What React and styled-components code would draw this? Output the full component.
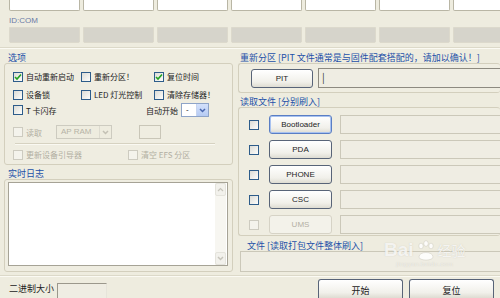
import React from 'react'
import styled, {createGlobalStyle} from 'styled-components'

const GlobalStyle = createGlobalStyle`
  html, body {
    margin: 0;
    padding: 0;
    background: #eeecdf;
  }
  body {
    font-family: "Noto Sans CJK SC", "Liberation Sans", sans-serif;
  }
`

const Window = styled.div`
  position: relative;
  width: 500px;
  height: 298px;
  overflow: hidden;
  background: #eeecdf;
  font-size: 8px;
  color: #222;
`

const SlotRow = styled.div`
  display: flex;
  gap: 3px;
  padding-left: 9px;
  height: ${p => p.h}px;
  margin-top: ${p => p.mt || 0}px;
`

const Slot = styled.div`
  flex: 0 0 71px;
  box-sizing: border-box;
  background: ${p => p.grey ? '#d6d4cb' : '#fff'};
  border: 1px solid ${p => p.grey ? '#dcd9cc' : '#b9b6a5'};
  border-top: ${p => p.grey ? '1px solid #dcd9cc' : 'none'};
  border-radius: 0 0 2px 2px;
`

const IdLabel = styled.div`
  height: 10px;
  margin-top: 5px;
  padding-left: 9px;
  font-family: "Liberation Sans", sans-serif;
  font-size: 8px;
  line-height: 10px;
  color: #6b7aa6;
`

const Divider = styled.div`
  height: 1px;
  margin-top: ${p => p.mt || 0}px;
  background: #dcd9c9;
  border-bottom: 1px solid #fbfaf3;
`

const Main = styled.div`
  display: flex;
  gap: 5px;
  padding-left: 4px;
  height: 226px;
`

const Column = styled.div`
  display: flex;
  flex-direction: column;
  width: ${p => p.w}px;
`

const GroupTitle = styled.div`
  height: 10px;
  line-height: 10px;
  padding-left: ${p => p.indent || 4}px;
  margin-top: ${p => p.mt || 0}px;
  font-size: 9px;
  color: #2350a8;
  white-space: nowrap;
`

const Group = styled.div`
  box-sizing: border-box;
  height: ${p => p.h}px;
  border: 1px solid #d3cfbd;
  border-right: ${p => p.open ? 'none' : '1px solid #d3cfbd'};
  border-radius: 3px;
  background: #efede1;
`

const OptionsBody = styled.div`
  display: flex;
  flex-direction: column;
  padding: 6px 0 0 8px;
`

const CheckGrid = styled.div`
  display: grid;
  grid-template-columns: 68px 73px auto;
  row-gap: 5px;
`

const CheckItem = styled.label`
  display: flex;
  align-items: center;
  gap: 3px;
  height: 13px;
  white-space: nowrap;
  color: ${p => p.disabled ? '#b2afa2' : '#222'};
`

const Box = styled.span`
  display: block;
  position: relative;
  flex: 0 0 auto;
  box-sizing: border-box;
  width: 10px;
  height: 10px;
  border: 1px solid ${p => p.disabled ? '#cdcbc0' : '#2d5c8a'};
  background: ${p => p.disabled ? '#f4f3ec' : 'linear-gradient(135deg, #dcdcd6, #fdfdfb)'};
`

const CheckMark = () => (
  <svg width="8" height="8" viewBox="0 0 8 8" style={{position: 'absolute', left: 0, top: 0}}>
    <path d="M1 4 L3 6 L7 1.5" fill="none" stroke="#21a121" strokeWidth="1.6"/>
  </svg>
)

const Check = ({label, checked, disabled}) => (
  <CheckItem disabled={disabled}>
    <Box disabled={disabled}>{checked && <CheckMark/>}</Box>
    {label}
  </CheckItem>
)

const OptRow = styled.div`
  display: flex;
  align-items: center;
  height: ${p => p.h || 14}px;
  margin-top: ${p => p.mt || 0}px;
`

const Spacer = styled.div`
  flex: 1;
`

const Combo = styled.div`
  display: flex;
  box-sizing: border-box;
  width: ${p => p.w}px;
  height: ${p => p.h || 14}px;
  margin-left: ${p => p.ml || 0}px;
  margin-right: ${p => p.mr || 0}px;
  border: 1px solid ${p => p.disabled ? '#cdcbc0' : '#8ea4c8'};
  background: ${p => p.disabled ? '#eeecdf' : '#fff'};
  font-family: "Liberation Sans", sans-serif;
  font-size: 8px;
  color: ${p => p.disabled ? '#b6b3a6' : '#222'};
`

const ComboText = styled.span`
  flex: 1;
  padding-left: 4px;
  line-height: 12px;
`

const ComboArrow = styled.span`
  display: flex;
  align-items: center;
  justify-content: center;
  width: 11px;
  background: ${p => p.disabled ? '#eeecdf' : 'linear-gradient(#d4e1fb, #b6cbf3)'};
  border-left: 1px solid ${p => p.disabled ? '#dddbd0' : '#c6d4ef'};
`

const Arrow = ({color}) => (
  <svg width="7" height="5" viewBox="0 0 7 5">
    <path d="M1 1 L3.5 3.5 L6 1" fill="none" stroke={color} strokeWidth="1.5"/>
  </svg>
)

const SmallBox = styled.div`
  box-sizing: border-box;
  width: 22px;
  height: 14px;
  margin-left: 27px;
  border: 1px solid #c9c6b8;
  background: #efede1;
`

const Separator = styled.div`
  height: 1px;
  width: 200px;
  margin: 4px 0 0 2px;
  background: #d6d2c1;
  border-bottom: 1px solid #faf9f2;
`

const Gap = styled.div`
  width: ${p => p.w}px;
`

const LogArea = styled.div`
  display: flex;
  box-sizing: border-box;
  margin: 2px 4px 0 3px;
  height: 84px;
  border: 1px solid #a6a396;
  background: #fff;
`

const LogText = styled.div`
  flex: 1;
`

const ScrollBar = styled.div`
  display: flex;
  flex-direction: column;
  justify-content: space-between;
  width: 11px;
  margin-right: 1px;
  background: #f7f6f1;
`

const ScrollBtn = styled.div`
  display: flex;
  align-items: center;
  justify-content: center;
  height: 11px;
  border: 1px solid #e4e3dc;
  border-radius: 2px;
  background: #f2f1ec;
`

const Field = styled.div`
  box-sizing: border-box;
  height: ${p => p.h || 19}px;
  flex: 1;
  margin-left: ${p => p.ml || 0}px;
  border: 1px solid ${p => p.dark ? '#8d8a80' : '#cbc8b9'};
  border-right: none;
  background: #efede3;
  font-size: 10px;
  line-height: 15px;
  padding-left: 3px;
  color: #333;
`

const PackField = styled(Field)`
  flex: 0 0 21px;
  margin-left: 2px;
`

const PitRow = styled.div`
  display: flex;
  align-items: center;
  padding: 4px 0 0 12px;
`

const Btn = styled.button`
  box-sizing: border-box;
  width: ${p => p.w || 63}px;
  height: ${p => p.h || 19}px;
  padding: 0;
  border: 1px solid ${p => p.disabled ? '#d6d3c6' : p.focus ? '#5a7ec4' : '#586478'};
  border-radius: 3px;
  background: ${p => p.disabled ? '#f3f2ea' : 'linear-gradient(#ffffff, #f1f0ea 70%, #dedcd2)'};
  box-shadow: ${p => p.focus ? 'inset 0 0 0 1px #a8c2f0' : 'none'};
  font-family: "Liberation Sans", "Noto Sans CJK SC", sans-serif;
  font-size: 8px;
  color: ${p => p.disabled ? '#b3b0a4' : '#222'};
  cursor: default;
`

const FileRows = styled.div`
  display: flex;
  flex-direction: column;
  gap: 6px;
  padding: 7px 0 0 10px;
`

const FileRow = styled.div`
  display: flex;
  align-items: center;
  height: 19px;
`

const CheckSlot = styled.div`
  display: flex;
  align-items: center;
  width: 20px;
`

const BottomBar = styled.div`
  display: flex;
  align-items: flex-end;
  height: 21px;
  padding-left: 9px;
`

const SizeLabel = styled.span`
  font-size: 9px;
  line-height: 14px;
  margin-bottom: 2px;
`

const SizeInput = styled.div`
  box-sizing: border-box;
  width: 50px;
  height: 15px;
  margin-left: 3px;
  border: 1px solid #9b988c;
  border-right-color: #e6e4da;
  border-bottom: none;
  background: #efede3;
`

const BottomBtn = styled(Btn)`
  margin-left: ${p => p.ml}px;
  border-bottom: none;
  border-radius: 3px 3px 0 0;
  font-family: "Noto Sans CJK SC", sans-serif;
  font-size: 9px;
  line-height: 22px;
`

const Watermark = styled.div`
  position: absolute;
  left: 384px;
  top: 240px;
  display: flex;
  flex-direction: column;
  align-items: center;
  color: rgba(255, 255, 255, 0.8);
  text-shadow: 0 0 1px rgba(170, 165, 150, 0.5);
  pointer-events: none;
`

const MarkLine = styled.div`
  display: flex;
  align-items: flex-end;
  font-family: "Liberation Sans", sans-serif;
  font-size: 19px;
  font-weight: bold;
  line-height: 20px;
`

const MarkCn = styled.span`
  font-family: "Noto Sans CJK SC", sans-serif;
  font-size: 14px;
  font-weight: normal;
`

const MarkSub = styled.div`
  font-family: "Liberation Sans", sans-serif;
  font-size: 6px;
  letter-spacing: 0.5px;
  margin-top: 1px;
  color: rgba(255, 255, 255, 0.6);
`

const Paw = () => (
  <svg width="22" height="22" viewBox="0 0 22 22" style={{margin: '0 1px -2px'}}>
    <g fill="rgba(255,255,255,0.85)" stroke="rgba(170,165,150,0.45)" strokeWidth="0.6">
      <ellipse cx="6" cy="6" rx="2.2" ry="2.8"/>
      <ellipse cx="11" cy="3.5" rx="2.2" ry="2.8"/>
      <ellipse cx="16" cy="6" rx="2.2" ry="2.8"/>
      <path d="M4 17 C4 11, 18 11, 18 17 C18 21, 4 21, 4 17 Z"/>
    </g>
  </svg>
)

const files = [
  {name: 'Bootloader', focus: true},
  {name: 'PDA'},
  {name: 'PHONE'},
  {name: 'CSC'},
  {name: 'UMS', disabled: true},
]

const slots = [0, 1, 2, 3, 4, 5, 6]

export default function App() {
  return (
    <Window>
      <GlobalStyle/>
      <SlotRow h={11}>
        {slots.map(i => <Slot key={i}/>)}
      </SlotRow>
      <IdLabel>ID:COM</IdLabel>
      <SlotRow h={16} mt={1}>
        {slots.map(i => <Slot key={i} grey/>)}
      </SlotRow>
      <Divider mt={4}/>
      <Main>
        <Column w={229}>
          <GroupTitle mt={4}>选项</GroupTitle>
          <Group h={102}>
            <OptionsBody>
              <CheckGrid>
                <Check label="自动重新启动" checked/>
                <Check label="重新分区！"/>
                <Check label="复位时间" checked/>
                <Check label="设备锁"/>
                <Check label="LED 灯光控制"/>
                <Check label="清除存储器！"/>
              </CheckGrid>
              <OptRow mt={2}>
                <Check label="T 卡闪存"/>
                <Spacer/>
                <span>自动开始</span>
                <Combo w={28} ml={3} mr={23}>
                  <ComboText>-</ComboText>
                  <ComboArrow><Arrow color="#4a68b0"/></ComboArrow>
                </Combo>
              </OptRow>
              <OptRow mt={8}>
                <Check label="读取" disabled/>
                <Combo w={56} ml={14} disabled>
                  <ComboText>AP RAM</ComboText>
                  <ComboArrow disabled><Arrow color="#c3c0b4"/></ComboArrow>
                </Combo>
                <SmallBox/>
              </OptRow>
              <Separator/>
              <OptRow mt={3} h={13}>
                <Check label="更新设备引导器" disabled/>
                <Gap w={46}/>
                <Check label="清空 EFS 分区" disabled/>
              </OptRow>
            </OptionsBody>
          </Group>
          <GroupTitle mt={4}>实时日志</GroupTitle>
          <Group h={93}>
            <LogArea>
              <LogText/>
              <ScrollBar>
                <ScrollBtn><svg width="7" height="5" viewBox="0 0 7 5"><path d="M1 4 L3.5 1.5 L6 4" fill="none" stroke="#c6c4bb" strokeWidth="1.2"/></svg></ScrollBtn>
                <ScrollBtn><Arrow color="#c6c4bb"/></ScrollBtn>
              </ScrollBar>
            </LogArea>
          </Group>
        </Column>
        <Column w={262}>
          <GroupTitle mt={4} indent={2}>重新分区 [PIT 文件通常是与固件配套搭配的，请加以确认！]</GroupTitle>
          <Group h={30} open>
            <PitRow>
              <Btn w={62}>PIT</Btn>
              <Field ml={5} h={20} dark>|</Field>
            </PitRow>
          </Group>
          <GroupTitle mt={4} indent={2}>读取文件 [分别刷入]</GroupTitle>
          <Group h={129} open>
            <FileRows>
              {files.map(f => (
                <FileRow key={f.name}>
                  <CheckSlot><Box disabled={f.disabled}/></CheckSlot>
                  <Btn focus={f.focus} disabled={f.disabled}>{f.name}</Btn>
                  <Field ml={8} h={19}/>
                </FileRow>
              ))}
            </FileRows>
          </Group>
          <GroupTitle mt={5} indent={9}>文件 [读取打包文件整体刷入]</GroupTitle>
          <PackField h={21}/>
        </Column>
      </Main>
      <Divider/>
      <BottomBar>
        <SizeLabel>二进制大小</SizeLabel>
        <SizeInput/>
        <BottomBtn w={85} h={19} ml={211}>开始</BottomBtn>
        <BottomBtn w={85} h={19} ml={6}>复位</BottomBtn>
      </BottomBar>
      <Watermark>
        <MarkLine>Bai<Paw/><MarkCn>经验</MarkCn></MarkLine>
        <MarkSub>jingyan.baidu.com</MarkSub>
      </Watermark>
    </Window>
  )
}
